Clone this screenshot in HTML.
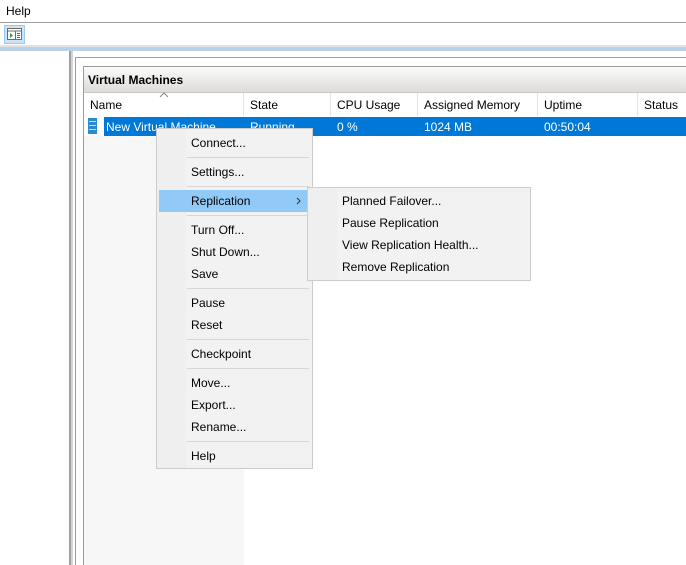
<!DOCTYPE html>
<html><head><style>
*{margin:0;padding:0;box-sizing:border-box}
body{width:686px;height:565px;overflow:hidden;background:#fff;font-family:"Liberation Sans",sans-serif;font-size:12px;color:#000;position:relative}
.a{position:absolute}
.t{position:absolute;white-space:nowrap;line-height:14px}
.sep{position:absolute;height:1px;background:#d7d7d7}
</style></head><body>
<div class="t" style="left:6px;top:4px">Help</div>
<div class="a" style="left:0;top:22px;width:686px;height:1px;background:#a0a0a0"></div>
<div class="a" style="left:4px;top:25px;width:21px;height:19px;background:#cce4f7;border:1px solid #99c9ef"></div>
<svg class="a" style="left:7px;top:28px" width="16" height="13"><rect x="0.5" y="0.5" width="14" height="11" fill="#fff" stroke="#6d6d6d"/><line x1="0" y1="3" x2="15" y2="3" stroke="#6d6d6d"/><path d="M3 5 L6 7.5 L3 10Z" fill="#2ea043"/><rect x="10" y="5" width="3" height="1" fill="#1e6fc4"/><rect x="10" y="7" width="3" height="1" fill="#1e6fc4"/><rect x="10" y="9" width="3" height="1" fill="#1e6fc4"/><line x1="8.5" y1="3" x2="8.5" y2="12" stroke="#6d6d6d"/></svg>
<div class="a" style="left:0;top:45px;width:686px;height:2px;background:#e2e2e2"></div>
<div class="a" style="left:0;top:47px;width:686px;height:4px;background:#b9d1ea"></div>
<div class="a" style="left:69px;top:51px;width:2px;height:514px;background:#a0a0a0"></div>
<div class="a" style="left:71px;top:51px;width:2px;height:514px;background:#d4d4d4"></div>
<div class="a" style="left:75px;top:57px;width:1px;height:508px;background:#a0a0a0"></div>
<div class="a" style="left:75px;top:57px;width:611px;height:1px;background:#a0a0a0"></div>
<div class="a" style="left:83px;top:66px;width:603px;height:27px;background:linear-gradient(#fbfbfa,#dedcd8);border-top:1px solid #9a9a9a;border-left:1px solid #9a9a9a;border-bottom:1px solid #c8c8c8"></div>
<div class="t" style="left:88px;top:73px;font-weight:bold">Virtual Machines</div>
<div class="a" style="left:83px;top:93px;width:1px;height:472px;background:#9a9a9a"></div>
<div class="a" style="left:84px;top:136px;width:160px;height:429px;background:#f7f7f7"></div>
<div class="a" style="left:243px;top:93px;width:1px;height:23px;background:#e5e5e5"></div>
<div class="a" style="left:330px;top:93px;width:1px;height:23px;background:#e5e5e5"></div>
<div class="a" style="left:417px;top:93px;width:1px;height:23px;background:#e5e5e5"></div>
<div class="a" style="left:537px;top:93px;width:1px;height:23px;background:#e5e5e5"></div>
<div class="a" style="left:637px;top:93px;width:1px;height:23px;background:#e5e5e5"></div>
<svg class="a" style="left:159px;top:92px" width="10" height="6"><path d="M1 5 L5 1 L9 5" fill="none" stroke="#888"/></svg>
<div class="t" style="left:90px;top:98px">Name</div>
<div class="t" style="left:250px;top:98px">State</div>
<div class="t" style="left:337px;top:98px">CPU Usage</div>
<div class="t" style="left:424px;top:98px">Assigned Memory</div>
<div class="t" style="left:544px;top:98px">Uptime</div>
<div class="t" style="left:644px;top:98px">Status</div>
<div class="a" style="left:104px;top:117px;width:582px;height:19px;background:#0078d7"></div>
<svg class="a" style="left:88px;top:118px" width="10" height="16"><rect x="0" y="0" width="9" height="16" fill="#2a8ad4"/><rect x="1" y="3" width="7" height="1" fill="#bfe0f7"/><rect x="1" y="7" width="7" height="1" fill="#bfe0f7"/><rect x="1" y="11" width="7" height="1" fill="#bfe0f7"/></svg>
<div class="t" style="left:106px;top:120px;color:#fff">New Virtual Machine</div>
<div class="t" style="left:250px;top:120px;color:#fff">Running</div>
<div class="t" style="left:337px;top:120px;color:#fff">0 %</div>
<div class="t" style="left:424px;top:120px;color:#fff">1024 MB</div>
<div class="t" style="left:544px;top:120px;color:#fff">00:50:04</div>

<div class="a" style="left:156px;top:128px;width:157px;height:341px;background:#f2f2f2;border:1px solid #ccc"></div>
<div class="a" style="left:157px;top:129px;width:29px;height:339px;background:#efefef"></div>
<div class="a" style="left:159px;top:190px;width:149px;height:22px;background:#91c9f7"></div>
<div class="sep" style="left:187px;top:157px;width:122px"></div>
<div class="sep" style="left:187px;top:186px;width:122px"></div>
<div class="sep" style="left:187px;top:215px;width:122px"></div>
<div class="sep" style="left:187px;top:288px;width:122px"></div>
<div class="sep" style="left:187px;top:339px;width:122px"></div>
<div class="sep" style="left:187px;top:368px;width:122px"></div>
<div class="sep" style="left:187px;top:441px;width:122px"></div>
<div class="t" style="left:191px;top:136px">Connect...</div>
<div class="t" style="left:191px;top:165px">Settings...</div>
<div class="t" style="left:191px;top:194px">Replication</div>
<svg class="a" style="left:296px;top:197px" width="6" height="8"><path d="M1 1 L4 4 L1 7" fill="none" stroke="#333"/></svg>
<div class="t" style="left:191px;top:223px">Turn Off...</div>
<div class="t" style="left:191px;top:245px">Shut Down...</div>
<div class="t" style="left:191px;top:267px">Save</div>
<div class="t" style="left:191px;top:296px">Pause</div>
<div class="t" style="left:191px;top:318px">Reset</div>
<div class="t" style="left:191px;top:347px">Checkpoint</div>
<div class="t" style="left:191px;top:376px">Move...</div>
<div class="t" style="left:191px;top:398px">Export...</div>
<div class="t" style="left:191px;top:420px">Rename...</div>
<div class="t" style="left:191px;top:449px">Help</div>

<div class="a" style="left:307px;top:187px;width:224px;height:94px;background:#f2f2f2;border:1px solid #ccc"></div>
<div class="a" style="left:308px;top:188px;width:29px;height:92px;background:#efefef"></div>
<div class="t" style="left:342px;top:194px">Planned Failover...</div>
<div class="t" style="left:342px;top:216px">Pause Replication</div>
<div class="t" style="left:342px;top:238px">View Replication Health...</div>
<div class="t" style="left:342px;top:260px">Remove Replication</div>
</body></html>
